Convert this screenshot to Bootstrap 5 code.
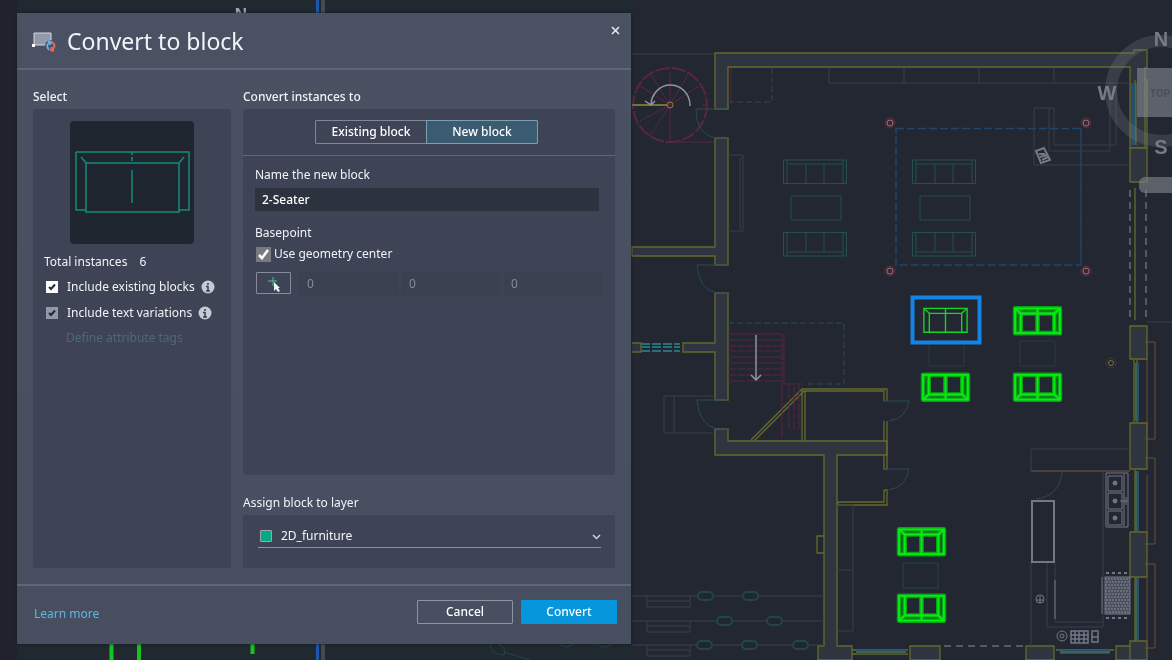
<!DOCTYPE html>
<html lang="en">
<head>
<meta charset="utf-8">
<meta name="viewport" content="width=device-width, initial-scale=1">
<title>Convert to block</title>
<link href="https://cdn.jsdelivr.net/npm/bootstrap@5.3.0/dist/css/bootstrap.min.css" rel="stylesheet">
<style>
  body { background: #232731; color: #f1f3f7; font: 12px/20px "Noto Sans", "Open Sans", sans-serif; }
  .drawing { position: fixed; inset: 0; width: 100%; height: 100vh; }
  .stage { position: relative; padding: 13px 17px 16px; }
  .dialog-box { background: linear-gradient(#4a5163, #464e60); width: 100%; max-width: 614px; box-shadow: 0 0 3px #181c24; }
  .dialog-head { height: 57px; padding: 0 9px 0 15px; border-bottom: 2px solid #5d6577; }
  .dialog-head h1 { font-size: 23px; line-height: 32px; font-weight: 400; margin-left: 9px; }
  .close-x { width: 14px; height: 16px; margin-top: 9px; }
  .dialog-main { padding: 17px 16px 16px; gap: 12px; }
  .side-col { flex: 0 0 198px; }
  .group-title { margin-bottom: 2px; font-size: 12px; line-height: 20px; }
  .layer-title { margin-top: 18px; }
  .pane { background: #3e4456; border-radius: 3px; }
  .preview { width: 124px; height: 123px; background: #20262f; border-radius: 4px; margin: 12px auto 8px; }
  .side-info { padding: 0 11px; }
  .form-check-input { width: 12px; height: 12px; margin: 0; border: 0; flex: none; }
  .form-check-input[type=checkbox] { border-radius: 0; }
  .form-check-input:checked { background-color: #fff; background-size: 12px; background-image: url("data:image/svg+xml,%3Csvg xmlns='http://www.w3.org/2000/svg' viewBox='0 0 12 12'%3E%3Cpath d='M3 6l2 2 4-4.500' fill='none' stroke='%23222a36' stroke-width='2'/%3E%3C/svg%3E"); }
  .form-check-input.muted:checked { background-color: #9298a5; }
  .form-check-input.center-box:checked { width: 15px; height: 15px; background-color: #777a80; background-size: 15px; background-image: url("data:image/svg+xml,%3Csvg xmlns='http://www.w3.org/2000/svg' viewBox='0 0 15 15'%3E%3Cpath d='M3 8l3 3 6-8' fill='none' stroke='%23fff' stroke-width='2.500'/%3E%3C/svg%3E"); }
  .check-list { margin: 2px 0; }
  .check-row { height: 26px; padding-left: 2px; }
  .check-row label { margin: 0 6px 0 9px; }
  .attr-link { color: #4b6979; padding-left: 22px; }
  .tab-row { height: 47px; padding-right: 5px; border-bottom: 1px solid #5e6678; }
  .btn { --bs-btn-border-radius: 1px; --bs-btn-padding-y: 0px; font-size: 12px; font-weight: 500; height: 24px; line-height: 20px; color: #fff; }
  .tab-btn { width: 112px; border-color: #7d8799; padding-inline: 0; }
  .tab-btn.active { background: #3b5b71; border-color: #7ea0b3; color: #fff; }
  .fields { padding: 9px 12px; }
  .name-row { margin: 3px 0 12px; padding-right: 4px; }
  .name-input { height: 23px; padding: 0 7px; border: 0; border-radius: 1px; font-size: 12px; font-weight: 500; }
  .name-input, .name-input:focus { background: #2c323e; color: #fff; }
  .center-row { gap: 3px; margin-top: 1px; padding-left: 1px; }
  .pick-btn { width: 35px; height: 22px; flex: none; border: 1px solid #858c9b; padding: 0; margin-left: 1px; }
  .coords { gap: 2px; margin-left: 8px; }
  .coord, .coord:disabled { background: #3a4150; color: #858b99; border: 0; border-radius: 0; height: 23px; padding: 0 8px; font-size: 12px; }
  .layer-pane { padding: 10px 14px 20px 15px; }
  .layer-line { border-bottom: 1px solid #8a92a1; padding-left: 2px; }
  .swatch { width: 12px; height: 12px; background: #06a884; border: 1px solid #9da6ad; border-radius: 1px; flex: none; }
  .layer-select, .layer-select:focus { background-color: transparent; border: 0; border-radius: 0; color: #f4f6f9; font-size: 12px; line-height: 22px; padding: 0 20px 0 9px; box-shadow: none;
    background-position: right 0 center; background-size: 9px; background-image: url("data:image/svg+xml,%3Csvg xmlns='http://www.w3.org/2000/svg' viewBox='0 0 9 9'%3E%3Cpath d='M1 3l3.500 3.500L8 3' fill='none' stroke='%23d0d4dc' stroke-width='1.500'/%3E%3C/svg%3E"); }
  .dialog-foot { height: 60px; border-top: 2px solid #5d6577; padding: 14px 14px 0 17px; gap: 8px; }
  .foot-btn { width: 96px; }
  .cancel-btn { border-color: #8d94a3; }
  .convert-btn { background: #0696dc; }
  .more-link { color: #62b6de; margin-top: 4px; }
</style>
</head>
<body>
<svg class="drawing" viewBox="0 0 1172 660" preserveAspectRatio="xMinYMin slice" fill="none" aria-hidden="true">
  <defs>
    <symbol id="sofa2" viewBox="0 0 50 30" overflow="visible">
      <path d="M1 1.500H49V28H43V7H7V28H1ZM7 28H43M25 1V28M1 1.500L7 7M49 1.500L43 7"/>
    </symbol>
    <symbol id="sofa3" viewBox="0 0 64 26" overflow="visible">
      <path d="M.5 1V24.500H4V5H60V24.500H63.500V1ZM4 24.500H60M23 5V24M41 5V24M4 1V5M60 1V5"/>
    </symbol>
    <g id="column"><circle r="5" fill="#3c2733" stroke="#5b2d40"/><circle r="3" stroke="#96737a"/></g>
    <g id="lane"><path stroke="#3a414c" d="M0 0H192M15 0V11H58V0M15 5H58"/></g>
  </defs>

  <path fill="#202930" d="M0 0H1172V13H0zM17 644H631V660H17z"/>
  <path fill="#20232d" d="M0 0H17V660H0z"/>
  <path fill="#232731" d="M631 0H1172V660H631z"/>
  <path stroke="#1c58ad" stroke-width="3" d="M317.500 0V13M317.500 644V660"/>
  <path stroke="#454a52" stroke-width="4" d="M323 0V13M323 644V660"/>
  <path stroke="#15c51b" stroke-width="4" d="M111.500 644V660M139 644V660M252.500 644V654"/>
  <text x="241" y="20" text-anchor="middle" fill="#a3a7ad" font-family="Liberation Sans, sans-serif" font-weight="700" font-size="17">N</text>

  <!-- walls -->
  <g fill="#2f353e" stroke="#656a2c" stroke-width="1.300">
    <path d="M715 53H1134V50H1147V68H1145V148H1130V67H728V109H715Z"/>
    <path d="M715 138H728V265H715V256H632V247H715Z"/>
    <path d="M715 293H728V400H715V352H683V343H715Z"/>
    <path d="M715 429H728V441H887V455H837V646H848V660H818V646H824V455H715Z"/>
    <path d="M632 343H641V352H632M1130 148H1147V182H1130ZM1130 326H1147V359H1130ZM1130 423H1147V469H1130ZM1130 532H1147V577H1130ZM1130 641H1147V660H1130ZM848 646H852V660H840M910 646H940V660H910ZM1026 646H1054V660H1026ZM1116 646H1130V660H1116Z"/>
    <path fill="none" d="M802 441V389H887V401M805 441V391H884V401M884 421V441M887 421V469H884V455M884 490V502H838V505H887V490H884M751 440L802 389M754 441L805 390M824 536H817V553H824M1135 80V145M1135 188V320M1145 80H1147V148M1134 360V422M1137 360V422M1135 470V532M1135 578V641M852 650H908M852 654H908M1056 650H1114"/>
  </g>
  <g stroke="#6b5138">
    <path d="M1145 342H1155V439H1145M1147 358V438M1145 458H1155V544H1145M1147 475V541M1145 564H1155V648H1145M1147 577V648"/>
  </g>
  <g stroke="#24506a" stroke-width="4"><path d="M1133 83V145M1137 363V421M1137 471V532M1137 578V640M856 652H906M1060 652H1110"/></g>
  <path stroke="#677044" d="M1136 83V145M1136 363V421M1136 471V532M1136 578V640M856 652H906M1060 652H1110"/>

  <!-- spiral stair -->
  <g stroke="#5b2542">
    <circle cx="670" cy="105" r="37" stroke-width="2" stroke-dasharray="14 2"/>
    <path d="M670 105V72M670 105L689 73M670 105L699 86M670 105L650 73M670 105L640 86M670 105L640 121M670 105L650 136M670 105V142H714M702 105H708M731 68V102"/>
    <path d="M728 334H783M728 340H783M728 346H783M728 351H783M728 357H783M728 363H783M728 369H783M728 375H783M728 381H783M782 334V384H804M784 334V384M782 385V438M789 385V430M794 385V430M799 385V430" stroke-dasharray="8 1"/>
  </g>
  <path stroke="#777431" stroke-width="2" d="M632 105H667"/><circle cx="670" cy="105" r="3" stroke="#8a813e"/>
  <path stroke="#90949f" stroke-width="1.500" d="M690 106A19 20 0 0 0 651 105M645 101L651 105L655 101M756 335V380M751 375L756 380L761 375"/>

  <!-- doors and dashed zones -->
  <g stroke="#284b58">
    <path d="M728 109H696Q696 134 716 138M728 265H697Q699 290 717 293M728 400H697Q699 425 717 429M884 401H909Q906 419 889 421M884 469H909Q906 487 889 490M1062 472Q1060 496 1036 499M716 138H728M716 293H728M716 429H728"/>
    <path stroke-dasharray="6 3" d="M728 323H844V384H805M728 102H772V68"/>
    <path d="M641 344H680M641 347H680M641 351H680" stroke="#286f79" stroke-width="2" stroke-dasharray="9 2"/>
  </g>
  <path stroke="#21456b" stroke-width="1.500" stroke-dasharray="8 3" d="M896 128.500H1081V265H896ZM1081 128V265"/>
  <use href="#column" x="890" y="123"/><use href="#column" x="1086" y="123"/><use href="#column" x="890" y="271"/><use href="#column" x="1086" y="271"/>
  <circle cx="1111" cy="363" r="5" stroke="#46382f"/><circle cx="1111" cy="363" r="2.500" stroke="#7c7334"/>

  <!-- fixtures -->
  <g stroke="#393e49">
    <path d="M632 54H714M728 155H743V231H728M740 158V229M829 68V83H1130M904 68V83M979 68V83M1054 68V83M1034 108H1054V145H1116V88M1034 108V165H1130M1049 108V151H1110V88M713 396H664V433H713M674 396V433M837 505H853V631H837M837 570H853M1031 449H1130M1031 449V471M1047 562V627H1103V472M1031 562V646M1055 562V622H1103M1147 322H1172"/>
    <path d="M1031 471H1130" stroke="#49413f" stroke-width="2"/>
    <path stroke="#676b78" stroke-width="1.500" stroke-dasharray="7 5" d="M1130 190V322M1146 190V322M944 646H1024"/>
  </g>
  <use href="#lane" x="632" y="596"/><use href="#lane" x="632" y="621"/><use href="#lane" x="632" y="645"/>
  <g stroke="#21454a" stroke-width="2" fill="#20272f">
    <rect x="698" y="592" width="15" height="8" rx="4"/><rect x="743" y="592" width="15" height="8" rx="4"/><rect x="717" y="617" width="15" height="8" rx="4"/><rect x="767" y="617" width="15" height="8" rx="4"/><rect x="697" y="641" width="15" height="8" rx="4"/><rect x="742" y="641" width="15" height="8" rx="4"/><rect x="793" y="641" width="15" height="8" rx="4"/>
    <path stroke-width="1" d="M490 644Q491 655 504 655Q507 648 498 644M504 652L530 660M560 644Q565 650 574 644M598 644Q604 650 612 644"/>
  </g>

  <!-- kitchen -->
  <g stroke="#747886">
    <path stroke-width="2" d="M1032 501H1054V562H1032Z"/>
    <path d="M1106 473H1128V527H1106ZM1108 476H1122V491H1108ZM1108 493H1122V509H1108ZM1108 511H1122V525H1108ZM1124 474V526M1055 580V619M1102 577V614"/>
    <path stroke-width="2" stroke-dasharray="3 3" d="M1106 573H1130M1106 618H1130"/>
    <g fill="#747886"><circle cx="1115" cy="483" r="2"/><circle cx="1115" cy="501" r="2"/><circle cx="1115" cy="518" r="2"/><path d="M1120 501H1128M1126 497V505"/></g>
    <circle cx="1062" cy="636" r="5"/><circle cx="1062" cy="636" r="2"/><circle cx="1040" cy="599" r="4"/><path d="M1036 600H1043M1040 596V603"/>
    <path stroke-width="1.500" d="M1071 631H1088V643H1071ZM1071 635H1088M1071 639H1088M1075 631V643M1079 631V643M1084 631V643M1092 631H1098V642H1092ZM1092 637H1098"/>
    <rect x="1105" y="577" width="25" height="37" fill="#4a4f5b"/>
    <path stroke-width="1.500" stroke-dasharray="2 1" d="M1105 579H1130M1106 582H1130M1105 585H1130M1106 588H1130M1105 591H1130M1106 594H1130M1105 597H1130M1106 600H1130M1105 603H1130M1106 606H1130M1105 609H1130M1106 612H1130"/>
    <path stroke-width="2" d="M1036 151L1044 148L1050 160L1041 163ZM1039 154H1045M1040 157L1047 155M1042 160L1048 157"/>
  </g>

  <!-- lounge furniture -->
  <g stroke="#23514b">
    <use href="#sofa3" x="783" y="159" width="64" height="26"/><path d="M791 196H841V220H791Z"/>
    <use href="#sofa3" width="64" height="26" transform="translate(783 257) scale(1 -1)"/>
    <use href="#sofa3" x="912" y="159" width="64" height="26"/><path d="M920 196H970V220H920Z"/>
    <use href="#sofa3" width="64" height="26" transform="translate(912 257) scale(1 -1)"/>
    <path stroke="#263c42" d="M929 341H964V366H929ZM1020 341H1055V366H1020Z"/><path stroke="#264941" d="M903 563H938V588H903Z"/>
  </g>
  <rect x="912.500" y="297.500" width="67" height="45" stroke="#1583e6" stroke-width="4"/>
  <use href="#sofa2" x="921" y="307" width="49" height="27" stroke="#16d625" stroke-width="1.500"/>
  <g stroke="#07a416" stroke-width="5" stroke-linejoin="round">
    <g id="marked">
      <use href="#sofa2" x="1014" y="307" width="47" height="28"/>
      <use href="#sofa2" width="47" height="28" transform="translate(922 401) scale(1 -1)"/>
      <use href="#sofa2" width="47" height="28" transform="translate(1014 401) scale(1 -1)"/>
      <use href="#sofa2" x="898" y="528" width="47" height="28"/>
      <use href="#sofa2" width="47" height="28" transform="translate(898 622) scale(1 -1)"/>
    </g>
  </g>
  <use href="#marked" stroke="#06ee12" stroke-width="2"/>

  <!-- view cube -->
  <circle cx="1161" cy="91" r="50" stroke="#7b808a" stroke-opacity=".25" stroke-width="12"/>
  <rect x="1137" y="68" width="49" height="49" fill="#8d919b" fill-opacity=".55"/>
  <rect x="1139" y="177" width="50" height="16" rx="6" fill="#7a7f87" fill-opacity=".65"/>
  <g fill="#777b84" font-family="Liberation Sans, sans-serif" font-weight="700" font-size="20" text-anchor="middle">
    <text x="1161" y="46">N</text><text x="1107" y="100">W</text><text x="1161" y="154">S</text>
    <text x="1150" y="97" text-anchor="start" fill="#4a4e58" font-size="10">TOP</text>
  </g>
</svg>

<main class="stage min-vh-100 d-flex">
  <form class="dialog-box d-flex flex-column" role="dialog" aria-labelledby="dialogTitle">
    <header class="dialog-head d-flex align-items-start">
      <div class="d-flex align-items-center h-100 flex-grow-1">
        <svg width="26" height="24" viewBox="0 0 26 24" fill="none" aria-hidden="true">
          <path d="M2 4H19V16H2Z" fill="#9299aa" stroke="#d5d9e2"/>
          <path d="M0 15H3V18H0Z" fill="#fff"/>
          <circle cx="19" cy="17" r="6" fill="#484f61"/>
          <path d="M17 21Q13 16 18 13M16 12L19 13L18 16" stroke="#64b3df" stroke-width="2"/>
          <path d="M20 13Q25 17 20 21M22 22L19 21L20 18" stroke="#e46866" stroke-width="2"/>
        </svg>
        <h1 class="mb-0" id="dialogTitle">Convert to block</h1>
      </div>
      <button type="button" class="close-x border-0 bg-transparent p-0 d-flex align-items-center justify-content-center" aria-label="Close">
        <svg width="9" height="9" viewBox="0 0 9 9" aria-hidden="true"><path d="M1 1L8 8M8 1L1 8" stroke="#e8ebf0" stroke-width="1.500"/></svg>
      </button>
    </header>

    <div class="dialog-main d-flex flex-grow-1">
      <section class="side-col d-flex flex-column">
        <h2 class="group-title">Select</h2>
        <div class="pane flex-grow-1">
          <div class="preview">
            <svg width="124" height="123" viewBox="0 0 124 123" fill="none" stroke="#168b7a" stroke-width="1.500" aria-hidden="true">
              <path d="M6 31H119V89H109M6 31V89H16M16 42H109V91H16ZM62 49V82M62 31V34M62 36V40M11 36L16 42M114 36L109 42"/>
            </svg>
          </div>
          <div class="side-info">
            <div class="d-flex gap-2"><span>Total instances</span><span class="ms-1">6</span></div>
            <div class="check-list">
              <div class="check-row d-flex align-items-center">
                <input class="form-check-input" type="checkbox" id="existing" checked>
                <label for="existing">Include existing blocks</label>
                <svg width="14" height="14" viewBox="0 0 14 14" aria-hidden="true"><circle cx="7" cy="7" r="6.500" fill="#c6cad6"/><path d="M7 6V11M5 6.500H7M5 11H9M7 3V5" stroke="#343b49" stroke-width="1.500"/></svg>
              </div>
              <div class="check-row d-flex align-items-center">
                <input class="form-check-input muted" type="checkbox" id="variations" checked>
                <label for="variations">Include text variations</label>
                <svg width="14" height="14" viewBox="0 0 14 14" aria-hidden="true"><circle cx="7" cy="7" r="6.500" fill="#c6cad6"/><path d="M7 6V11M5 6.500H7M5 11H9M7 3V5" stroke="#343b49" stroke-width="1.500"/></svg>
              </div>
            </div>
            <a href="#" class="attr-link text-decoration-none d-block">Define attribute tags</a>
          </div>
        </div>
      </section>

      <section class="right-col d-flex flex-column flex-grow-1">
        <h2 class="group-title">Convert instances to</h2>
        <div class="pane flex-grow-1">
          <div class="tab-row d-flex justify-content-center align-items-center">
            <div class="btn-group" role="group" aria-label="Block kind">
              <button type="button" class="btn tab-btn">Existing block</button>
              <button type="button" class="btn tab-btn active">New block</button>
            </div>
          </div>
          <div class="fields">
            <label class="d-block" for="blockName">Name the new block</label>
            <div class="name-row"><input class="form-control name-input" id="blockName" value="2-Seater"></div>
            <div>Basepoint</div>
            <div class="center-row d-flex align-items-center">
              <input class="form-check-input center-box" type="checkbox" id="centre" checked>
              <label for="centre">Use geometry center</label>
            </div>
            <div class="d-flex mt-2">
              <button type="button" class="btn pick-btn d-flex justify-content-center align-items-center" aria-label="Pick point">
                <svg width="18" height="18" viewBox="0 0 18 18" aria-hidden="true"><path d="M8 3V12M3 7H12" stroke="#48c78b"/><path d="M9 8V17L11 15L13 18L15 17L13 14H15Z" fill="#f0f3f6"/></svg>
              </button>
              <div class="coords d-flex flex-grow-1">
                <input class="form-control coord" value="0" aria-label="X" disabled>
                <input class="form-control coord" value="0" aria-label="Y" disabled>
                <input class="form-control coord" value="0" aria-label="Z" disabled>
              </div>
            </div>
          </div>
        </div>
        <label class="group-title layer-title" for="layer">Assign block to layer</label>
        <div class="pane layer-pane">
          <div class="layer-line d-flex align-items-center">
            <span class="swatch"></span>
            <select class="form-select layer-select" id="layer"><option>2D_furniture</option></select>
          </div>
        </div>
      </section>
    </div>

    <footer class="dialog-foot d-flex align-items-start">
      <a href="#" class="more-link text-decoration-none me-auto">Learn more</a>
      <button type="button" class="btn foot-btn cancel-btn">Cancel</button>
      <button type="submit" class="btn foot-btn convert-btn">Convert</button>
    </footer>
  </form>
</main>
<script src="https://cdn.jsdelivr.net/npm/bootstrap@5.3.0/dist/js/bootstrap.bundle.min.js"></script>
</body>
</html>
